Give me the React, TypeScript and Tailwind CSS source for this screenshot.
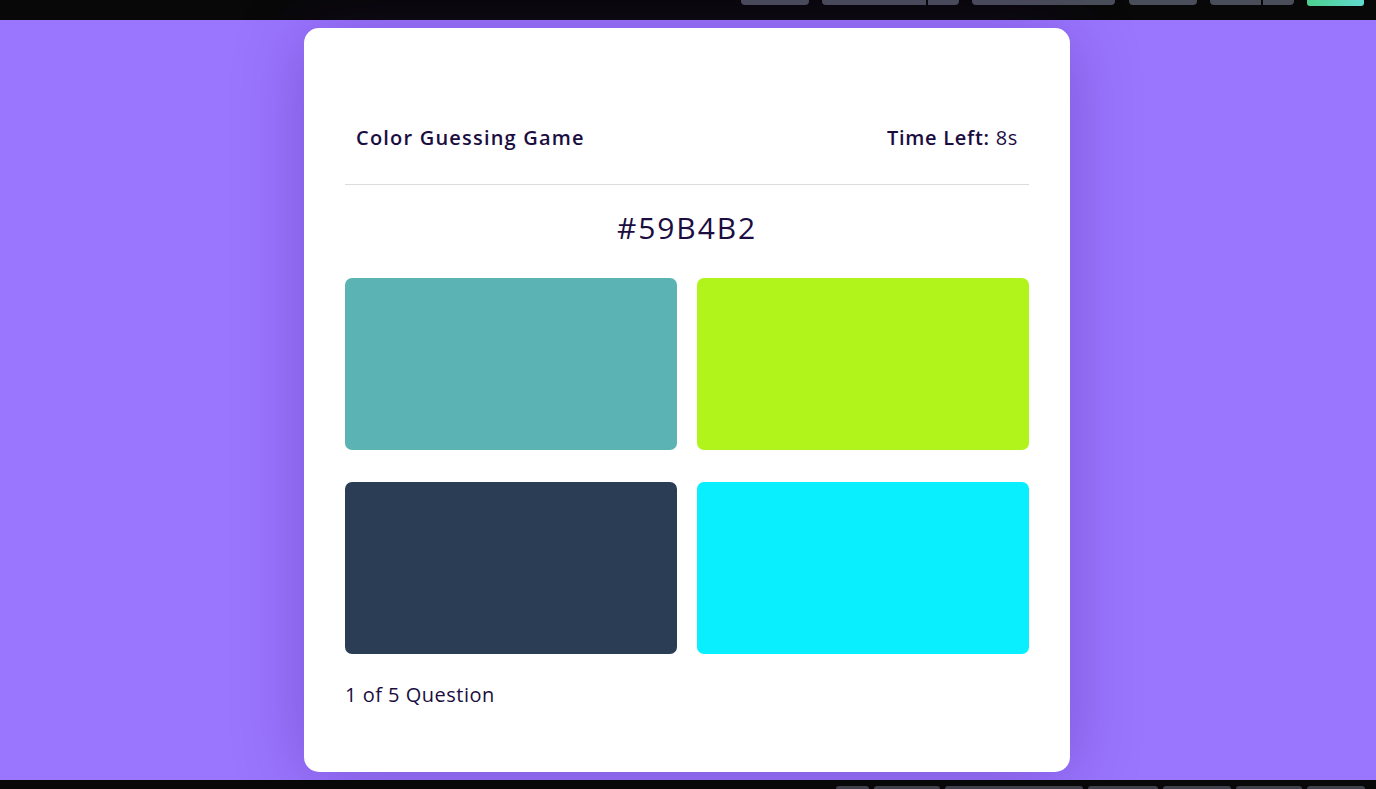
import React from "react";

const swatches = ["#5bb4b3", "#b0f41c", "#2a3d55", "#0aeffd"];

const topTabs: { w: number; ml: number; split?: number }[] = [
  { w: 68, ml: 0 },
  { w: 137, ml: 13, split: 104 },
  { w: 143, ml: 13 },
  { w: 68, ml: 14 },
  { w: 84, ml: 13, split: 51 },
];

const bottomTabs = [33, 66, 138, 70, 68, 66, 58];

export default function App() {
  return (
    <div
      className="flex h-screen w-full flex-col overflow-hidden text-[#1b0d3f]"
      style={{ fontFamily: '"Open Sans", "Liberation Sans", sans-serif' }}
    >
      {/* top strip */}
      <div className="flex h-[20px] shrink-0 items-start justify-end bg-[#080808] pr-[12px]">
        {topTabs.map((t, i) => (
          <div
            key={i}
            className="flex h-[5px] overflow-hidden rounded-b-[4px]"
            style={{ width: t.w, marginLeft: t.ml }}
          >
            {t.split ? (
              <>
                <div className="h-full bg-[#4a4d5a]" style={{ width: t.split }} />
                <div className="ml-[2px] h-full flex-1 bg-[#4a4d5a]" />
              </>
            ) : (
              <div className="h-full w-full bg-[#4a4d5a]" />
            )}
          </div>
        ))}
        <div className="ml-[13px] h-[6px] w-[57px] rounded-b-[3px] bg-gradient-to-r from-[#4ccf8c] to-[#62d9cf]" />
      </div>

      {/* main */}
      <div className="flex flex-1 items-center justify-center bg-[#9a75fe] pr-[2px]">
        <div className="flex h-[744px] w-[766px] flex-col rounded-[15px] bg-white px-[41px] shadow-[0_6px_70px_rgba(50,15,120,0.28)]">
          <div className="flex items-center justify-between px-[11px] pt-[96px] pb-[32px] text-[20px] leading-[28px]">
            <h1 className="font-semibold tracking-[1.2px]">Color Guessing Game</h1>
            <div className="tracking-[0.7px]">
              <span className="font-semibold">Time Left:</span> 8s
            </div>
          </div>
          <div className="h-px bg-[#dcdbe0]" />
          <div className="mt-[23px] text-center text-[30px] leading-[40px] tracking-[1.9px]">
            #59B4B2
          </div>
          <div className="mt-[30px] grid grid-cols-2 gap-x-[20px] gap-y-[32px]">
            {swatches.map((c) => (
              <button
                key={c}
                className="h-[172px] rounded-[7px]"
                style={{ backgroundColor: c }}
              />
            ))}
          </div>
          <div className="mt-[27px] text-[20px] leading-[28px] tracking-[0.5px]">1 of 5 Question</div>
        </div>
      </div>

      {/* bottom strip */}
      <div className="flex h-[9px] shrink-0 items-end justify-end bg-[#080808] pr-[11px]">
        {bottomTabs.map((w, i) => (
          <div
            key={i}
            className="ml-[5px] h-[3px] rounded-t-[3px] bg-[#3f424d]"
            style={{ width: w }}
          />
        ))}
      </div>
    </div>
  );
}
